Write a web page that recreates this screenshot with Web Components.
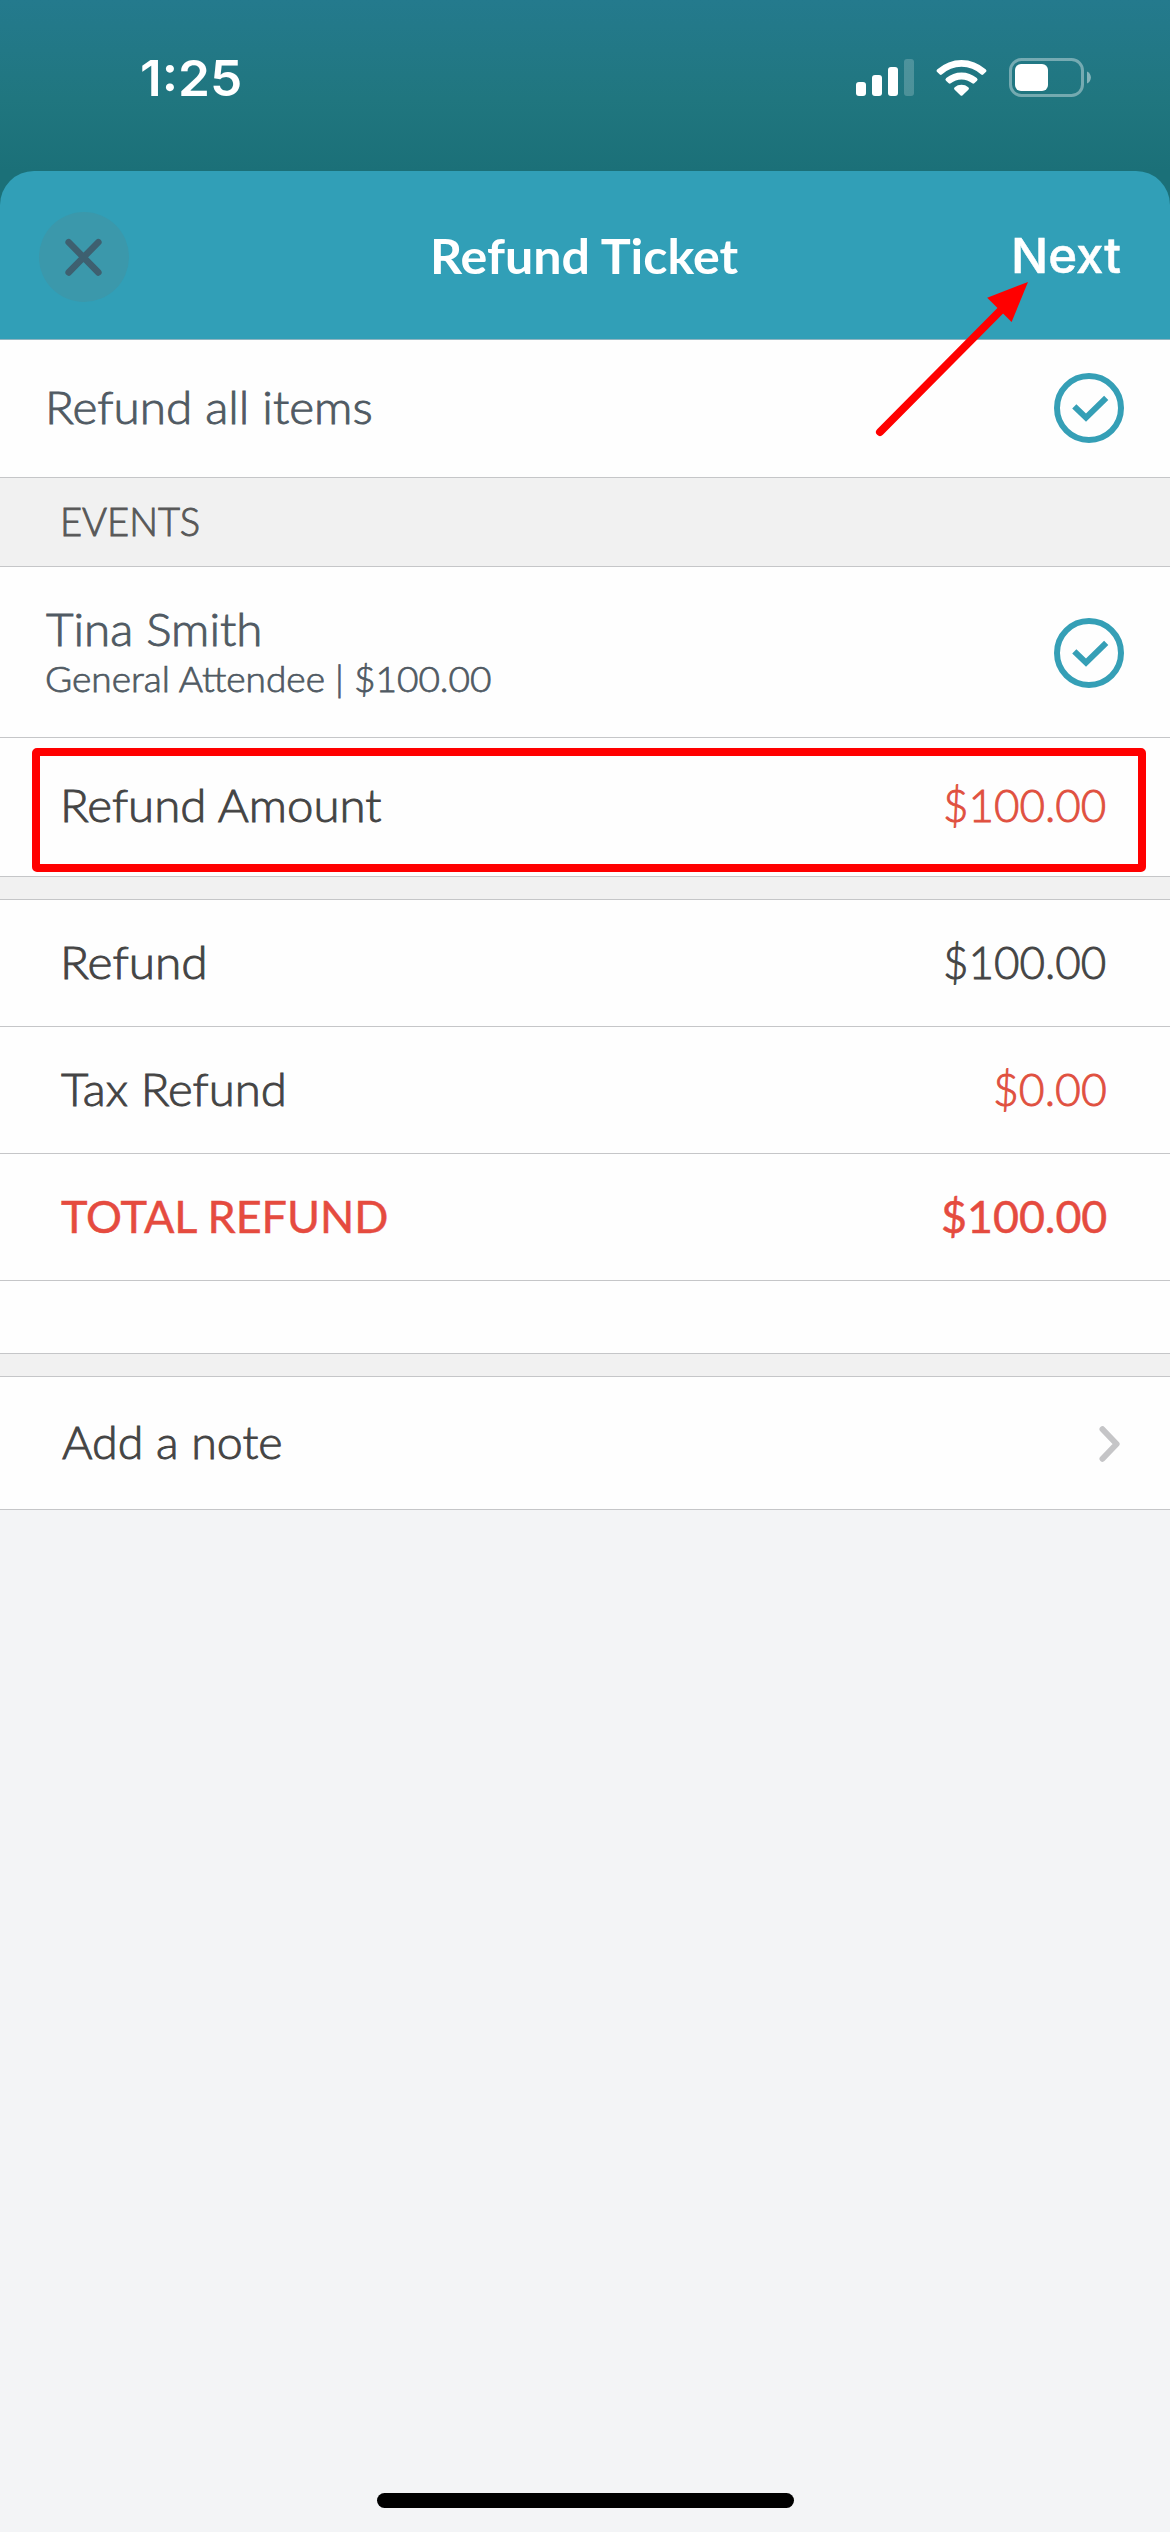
<!DOCTYPE html>
<html lang="en">
<head>
<meta charset="utf-8">
<title>Refund Ticket</title>
<style>
html, body { margin: 0; padding: 0; }
body { width: 1170px; height: 2532px; overflow: hidden; background: #f3f4f6; }
</style>
</head>
<body>
<refund-screen></refund-screen>

<script>
// Defines an element whose open shadow root holds the given markup.
const define = (name, html, setup) => customElements.define(name, class extends HTMLElement {
  connectedCallback() {
    if (this.shadowRoot) return;
    const t = document.createElement('template');
    t.innerHTML = html;
    this.attachShadow({ mode: 'open' }).append(t.content.cloneNode(true));
    if (setup) setup.call(this);
  }
});

// One line of text widened or narrowed so that its ink spans exactly `span` pixels.
define('fit-text', `
  <style>
    :host { display: block; flex: none; white-space: nowrap; line-height: 1.2; }
    span { display: inline-block; transform-origin: 0 50%; }
  </style><span></span>`, function () {
  const text = this.getAttribute('text');
  const span = this.shadowRoot.querySelector('span');
  const width = +this.getAttribute('span');
  span.textContent = text;
  const cs = getComputedStyle(this);
  const stroke = parseFloat(cs.webkitTextStrokeWidth) || 0;
  const ctx = document.createElement('canvas').getContext('2d');
  ctx.font = `${cs.fontWeight} ${cs.fontSize} ${cs.fontFamily}`;
  const m = ctx.measureText(text);
  const ink = m.actualBoundingBoxLeft + m.actualBoundingBoxRight + stroke;
  const scale = width / ink;
  this.style.width = width + 'px';
  span.style.transform = `scaleX(${scale.toFixed(4)})`;
  span.style.marginLeft = ((m.actualBoundingBoxLeft + stroke / 2) * scale).toFixed(2) + 'px';
});

define('status-bar', `
  <style>
    :host { display: flex; align-items: center; justify-content: space-between;
      box-sizing: border-box; height: 171px; padding: 0 79px 15px 142.5px; color: #fff; }
    fit-text { font: 600 49.5px Inter, sans-serif; }
    svg { display: block; }
  </style>
  <fit-text text="1:25" span="98"></fit-text>
  <svg width="236" height="42" viewBox="855 57 236 42" fill="#fff">
    <rect x="856" y="82" width="10" height="14" rx="3"/>
    <rect x="872" y="75" width="10" height="21" rx="3"/>
    <rect x="888" y="67" width="10" height="29" rx="3"/>
    <rect x="904" y="59" width="10" height="37" rx="3" opacity=".2"/>
    <path d="M937.4 69.2 A36.3 36.3 0 0 1 985.6 69.2 Q987.2 70.6 985.8 72 L983.2 74.5 Q982.2 75.3 981.2 74.5 A28.8 28.8 0 0 0 941.8 74.5 Q940.8 75.3 939.8 74.5 L937.2 72 Q935.8 70.6 937.4 69.2Z"/>
    <path d="M946.2 78 A23.8 23.8 0 0 1 976.8 78 Q978.4 79.4 977 80.8 L974.3 83.3 Q973.3 84.2 972.2 83.3 A16.6 16.6 0 0 0 950.8 83.3 Q949.7 84.2 948.7 83.3 L946 80.8 Q944.6 79.4 946.2 78Z"/>
    <path d="M954.7 87.2 A10.9 10.9 0 0 1 968.3 87.2 Q969.7 88.4 968.4 89.7 L962.6 95.3 Q961.5 96.3 960.4 95.3 L954.6 89.7 Q953.3 88.4 954.7 87.2Z"/>
    <rect x="1010.5" y="59.5" width="72" height="36" rx="11" fill="none" stroke="#fff" stroke-width="3" opacity=".38"/>
    <rect x="1015" y="64" width="33" height="27" rx="6"/>
    <path d="M1087 71.5 C1092.2 73.5 1092.2 81.5 1087 83.5Z" opacity=".45"/>
  </svg>`);

define('close-button', `
  <style>
    :host { display: flex; align-items: center; justify-content: center;
      width: 90px; height: 90px; border-radius: 50%; background: #3b98ab; }
    svg { display: block; }
  </style>
  <svg width="40" height="40" viewBox="0 0 40 40" stroke="#3e6070" stroke-width="6.6" stroke-linecap="round">
    <path d="M4.7 5.2 L34.3 35.4 M34.3 5.2 L4.7 35.4"/>
  </svg>`);

define('sheet-header', `
  <style>
    :host { display: grid; grid-template-columns: 1fr auto 1fr; align-items: center;
      box-sizing: border-box; height: 169px; padding: 0 49px 0 39px;
      background: #319fb7; border-bottom: 1px solid #8fb4c0;
      border-radius: 34px 34px 0 0; color: #fff; }
    .title { font: 700 47px Lato, sans-serif; margin-left: 13px; padding-top: 1px; }
    close-button { margin-top: 3px; }
    .next { font: 500 48.5px Inter, sans-serif; -webkit-text-stroke: .5px #fff; justify-self: end; }
  </style>
  <close-button></close-button>
  <fit-text class="title" text="Refund Ticket" span="307"></fit-text>
  <fit-text class="next" text="Next" span="107"></fit-text>`);

define('check-circle', `
  <style>:host, svg { display: block; }</style>
  <svg width="70" height="70" viewBox="0 0 70 70" fill="none" stroke="#359fb6" stroke-width="6">
    <circle cx="35" cy="35" r="32"/>
    <path d="M20.3 33.3 L32 44.6 L52.2 24.8"/>
  </svg>`);

define('chevron-right', `
  <style>:host, svg { display: block; }</style>
  <svg width="21" height="38" viewBox="0 0 21 38" fill="none" stroke="#c5c5c7" stroke-width="6"
    stroke-linecap="round" stroke-linejoin="round"><path d="M3.5 4.2 L17.6 19 L3.5 33.8"/></svg>`);

define('list-row', `
  <style>
    :host { display: flex; align-items: center; justify-content: space-between; box-sizing: border-box;
      height: var(--h, 127px); padding: 0 63.5px; background: #fefefe; border-bottom: 1px solid #c5c6c8;
      font: 300 44.3px Lato, sans-serif; -webkit-text-stroke: .9px currentColor; color: #444; }
    :host([kind="ticket"]) { padding: 0 46px; color: #505a63; }
    :host([kind="total"]) { font-weight: 400; -webkit-text-stroke-width: .5px; color: #e54b3f; }
    :host([kind="section"]) { background: #f1f1f1; color: #585858; font-size: 38.5px; }
    :host([kind="gap"]) { background: #f1f1f1; }
  </style><slot></slot>`);

define('callout-layer', `
  <style>
    :host { position: absolute; inset: 0; pointer-events: none; }
    svg { display: block; }
  </style>
  <svg width="1170" height="2532" viewBox="0 0 1170 2532">
    <path d="M880 432 L1002 309" stroke="#f00" stroke-width="8" stroke-linecap="round"/>
    <path d="M1028 282 L987.2 297.7 L1011.6 322Z" fill="#f00"/>
    <rect x="36" y="752" width="1106" height="116" rx="1" fill="none" stroke="#f00" stroke-width="8" stroke-linejoin="round"/>
  </svg>`);

define('refund-screen', `
  <style>
    :host { display: flex; flex-direction: column; position: relative; width: 1170px; height: 2532px;
      background: linear-gradient(#247a8d 0, #20767f 100px, #1b7078 171px, #1b7078 215px, #f3f4f6 215px); }
    .red { color: #e0503f; }
    .stack { display: flex; flex-direction: column; padding-top: 2px; }
    .name { line-height: 52px; }
    .detail { font-size: 35.3px; line-height: 48px; -webkit-text-stroke-width: .75px; margin-left: .7px; }
    .up3 { padding-bottom: 3px; }
    .up4 { padding-bottom: 4px; }
    .home { width: 417px; height: 15px; border-radius: 8px; background: #000; margin: auto auto 24px 377px; }
  </style>
  <status-bar></status-bar>
  <sheet-header></sheet-header>
  <list-row kind="ticket" style="--h:138px">
    <fit-text class="up4" text="Refund all items" span="322.5" style="margin-left:3px"></fit-text>
    <check-circle style="margin-bottom:1px"></check-circle>
  </list-row>
  <list-row kind="section" style="--h:89px"><fit-text text="EVENTS" span="135.6" style="padding-bottom:1px"></fit-text></list-row>
  <list-row kind="ticket" style="--h:171px">
    <div class="stack">
      <fit-text class="name" text="Tina Smith" span="213.8"></fit-text>
      <fit-text class="detail" text="General Attendee | $100.00" span="445.9"></fit-text>
    </div>
    <check-circle style="margin-top:1px"></check-circle>
  </list-row>
  <list-row style="--h:139px">
    <fit-text class="up4" text="Refund Amount" span="319.6"></fit-text>
    <fit-text class="up4 red" text="$100.00" span="161.5"></fit-text>
  </list-row>
  <list-row kind="gap" style="--h:23px"></list-row>
  <list-row>
    <fit-text class="up3" text="Refund" span="140.7"></fit-text>
    <fit-text class="up3" text="$100.00" span="161.5"></fit-text>
  </list-row>
  <list-row>
    <fit-text class="up3" text="Tax Refund" span="223.2" style="margin-left:-3px"></fit-text>
    <fit-text class="up3 red" text="$0.00" span="112"></fit-text>
  </list-row>
  <list-row kind="total">
    <fit-text class="up3" text="TOTAL REFUND" span="327.6" style="margin-left:-3px"></fit-text>
    <fit-text class="up3" text="$100.00" span="164.1"></fit-text>
  </list-row>
  <list-row style="--h:73px"></list-row>
  <list-row kind="gap" style="--h:23px"></list-row>
  <list-row style="--h:133px">
    <fit-text class="up3" text="Add a note" span="219.4" style="margin-left:-2.3px"></fit-text>
    <chevron-right style="margin:2px -13.5px 0 0"></chevron-right>
  </list-row>
  <div class="home"></div>
  <callout-layer></callout-layer>`);
</script>
</body>
</html>
